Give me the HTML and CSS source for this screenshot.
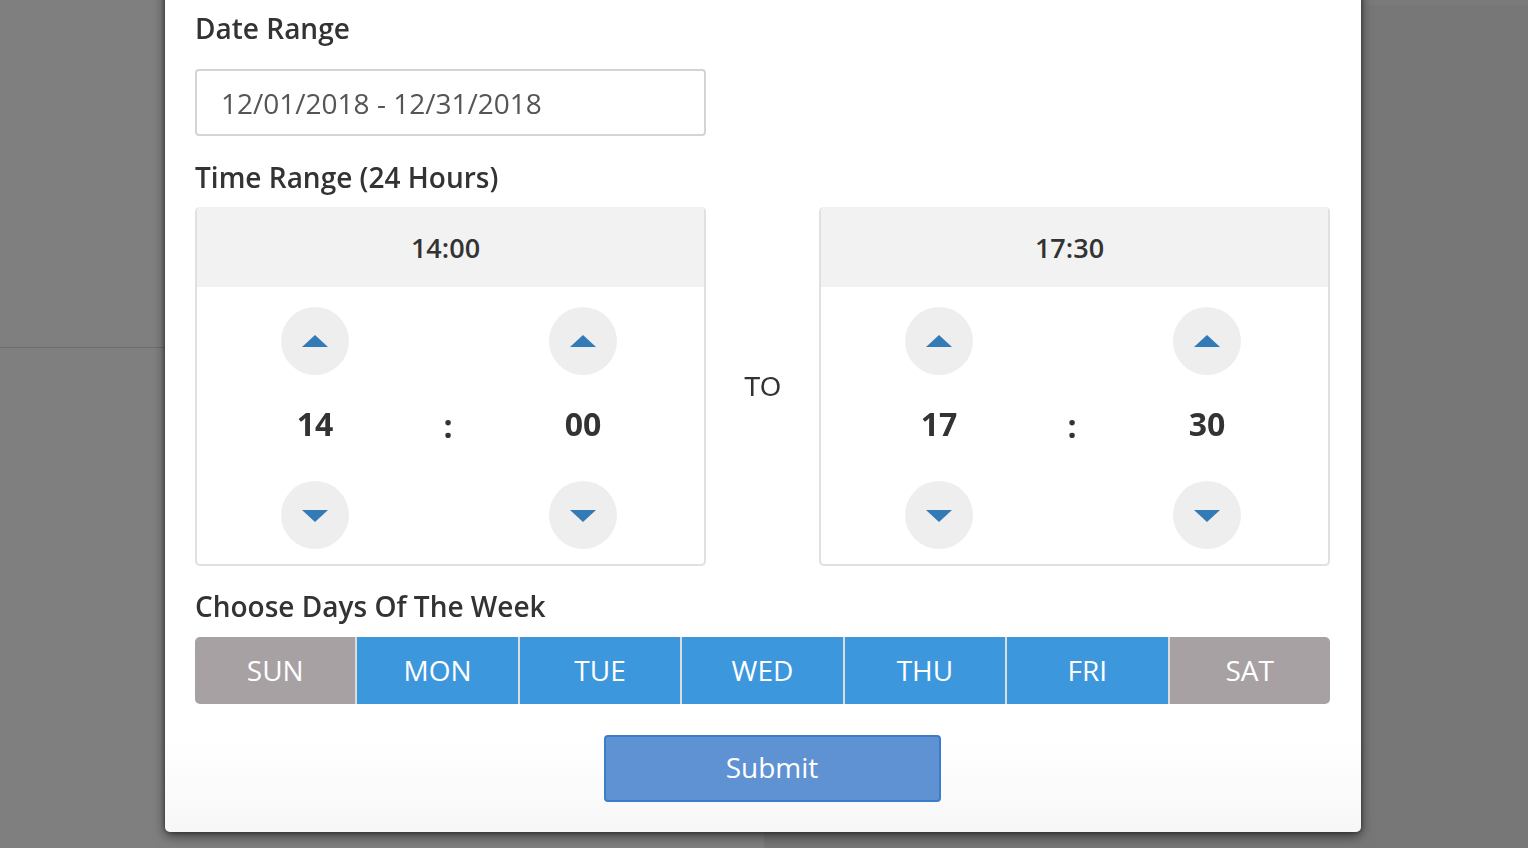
FILE: index.html
```html
<!DOCTYPE html>
<html lang="en">
<head>
<meta charset="utf-8">
<title>Schedule</title>
<link rel="stylesheet" href="styles.css">
</head>
<body>
<div class="page">
  <div class="page-left"><div class="page-left-top"></div></div>
  <div class="page-right"></div>
</div>

<div class="modal">
  <div class="modal-body">
    <div class="field-label label-date">Date Range</div>
    <div class="date-input">12/01/2018 - 12/31/2018</div>

    <div class="field-label label-time">Time Range (24 Hours)</div>
    <div class="time-row">
      <div class="picker">
        <div class="picker-head">14:00</div>
        <div class="picker-grid">
          <div class="spin up"><svg viewBox="0 0 26 12" width="26" height="12"><polygon points="0,12 13,0 26,12" /></svg></div>
          <div></div>
          <div class="spin up"><svg viewBox="0 0 26 12" width="26" height="12"><polygon points="0,12 13,0 26,12" /></svg></div>
          <div class="num">14</div>
          <div class="num sep">:</div>
          <div class="num">00</div>
          <div class="spin down"><svg viewBox="0 0 26 12" width="26" height="12"><polygon points="0,0 26,0 13,12" /></svg></div>
          <div></div>
          <div class="spin down"><svg viewBox="0 0 26 12" width="26" height="12"><polygon points="0,0 26,0 13,12" /></svg></div>
        </div>
      </div>
      <div class="to">TO</div>
      <div class="picker">
        <div class="picker-head">17:30</div>
        <div class="picker-grid">
          <div class="spin up"><svg viewBox="0 0 26 12" width="26" height="12"><polygon points="0,12 13,0 26,12" /></svg></div>
          <div></div>
          <div class="spin up"><svg viewBox="0 0 26 12" width="26" height="12"><polygon points="0,12 13,0 26,12" /></svg></div>
          <div class="num">17</div>
          <div class="num sep">:</div>
          <div class="num">30</div>
          <div class="spin down"><svg viewBox="0 0 26 12" width="26" height="12"><polygon points="0,0 26,0 13,12" /></svg></div>
          <div></div>
          <div class="spin down"><svg viewBox="0 0 26 12" width="26" height="12"><polygon points="0,0 26,0 13,12" /></svg></div>
        </div>
      </div>
    </div>

    <div class="field-label label-days">Choose Days Of The Week</div>
    <div class="days">
      <div class="day off">SUN</div>
      <div class="day on">MON</div>
      <div class="day on">TUE</div>
      <div class="day on">WED</div>
      <div class="day on">THU</div>
      <div class="day on">FRI</div>
      <div class="day off">SAT</div>
    </div>

    <div class="submit-row">
      <button class="submit" type="button">Submit</button>
    </div>
  </div>
</div>
</body>
</html>
```

FILE: styles.css
```css
html, body {
  margin: 0;
  padding: 0;
  height: 100%;
  overflow: hidden;
}

body {
  font-family: "Open Sans", "Liberation Sans", sans-serif;
  background: #7f7f7f;
}

.page {
  display: flex;
  height: 848px;
}

.page-left {
  flex: 0 0 764px;
  background: #7f7f7f;
}

.page-left-top {
  height: 347px;
  border-bottom: 1px solid #6c6c6c;
}

.page-right {
  flex: 1;
  background: #777777;
  border-top: 5px solid #7a7a7a;
  box-sizing: border-box;
}

.modal {
  position: fixed;
  left: 165px;
  top: -30px;
  width: 1196px;
  height: 862px;
  background: linear-gradient(to bottom, #ffffff 0, #ffffff 770px, #f7f7f7 862px);
  border-radius: 0 0 5px 5px;
  box-shadow: 0 4px 12px rgba(0, 0, 0, 0.55), 0 0 4px rgba(0, 0, 0, 0.45);
  box-sizing: border-box;
}

.modal-body {
  padding: 38px 30px 0 30px;
  display: flex;
  flex-direction: column;
}

.field-label {
  font-size: 28px;
  font-weight: 600;
  color: #333333;
  line-height: 40px;
  height: 40px;
}

.label-time {
  margin-top: 21px;
}

.label-days {
  margin-top: 20px;
}

.date-input {
  margin-top: 21px;
  width: 511px;
  height: 67px;
  box-sizing: border-box;
  border: 2px solid #d4d4d4;
  border-radius: 4px;
  padding: 0 0 0 24px;
  display: flex;
  align-items: center;
  font-size: 28px;
  color: #555555;
}

.time-row {
  margin-top: 10px;
  display: flex;
  align-items: center;
}

.picker {
  width: 511px;
  height: 359px;
  box-sizing: border-box;
  border: 2px solid #e0e0e0;
  border-top: none;
  border-radius: 5px;
  overflow: hidden;
  display: flex;
  flex-direction: column;
}

.picker-head {
  height: 80px;
  flex: 0 0 80px;
  background: #f2f2f2;
  margin: 0 -2px;
  padding-right: 10px;
  display: flex;
  align-items: center;
  justify-content: center;
  font-size: 27px;
  font-weight: 600;
  color: #333333;
}

.picker-grid {
  display: grid;
  grid-template-columns: 136px 132px 136px;
  grid-template-rows: 68px 106px 68px;
  padding: 20px 0 0 50px;
  justify-items: center;
  align-items: center;
}

.spin {
  width: 68px;
  height: 68px;
  border-radius: 50%;
  background: #eeeeee;
  display: flex;
  align-items: center;
  justify-content: center;
}

.spin svg {
  fill: #337ab7;
  display: block;
}

.spin.up svg {
  margin-top: -1px;
}

.spin.down svg {
  margin-top: 1px;
}

.num {
  font-size: 32px;
  font-weight: 700;
  color: #333333;
  line-height: 40px;
  margin-bottom: 8px;
}

.num.sep {
  margin-top: 0;
  margin-bottom: 4px;
  margin-right: 2px;
}

.to {
  flex: 0 0 113px;
  text-align: center;
  font-family: "Liberation Sans", Arial, sans-serif;
  font-size: 27px;
  color: #333333;
  padding-top: 2px;
}

.days {
  margin-top: 11px;
  display: flex;
  height: 67px;
  width: 1135px;
  border-radius: 5px;
  overflow: hidden;
}

.day {
  flex: 1;
  display: flex;
  align-items: center;
  justify-content: center;
  color: #ffffff;
  font-size: 28px;
  padding-bottom: 2px;
}

.day + .day {
  border-left: 2px solid #dcdcdc;
}

.day.on {
  background: #3c97dd;
}

.day.off {
  background: #a7a1a4;
}

.submit-row {
  margin-top: 31px;
  display: flex;
  justify-content: center;
  padding-left: 18px;
}

.submit {
  width: 337px;
  height: 67px;
  background: #5f92d3;
  border: 2px solid #3b7dcb;
  border-radius: 4px;
  color: #ffffff;
  font-family: "Open Sans", "Liberation Sans", sans-serif;
  font-size: 28px;
  padding: 0 0 4px 0;
  line-height: 1;
}
```
